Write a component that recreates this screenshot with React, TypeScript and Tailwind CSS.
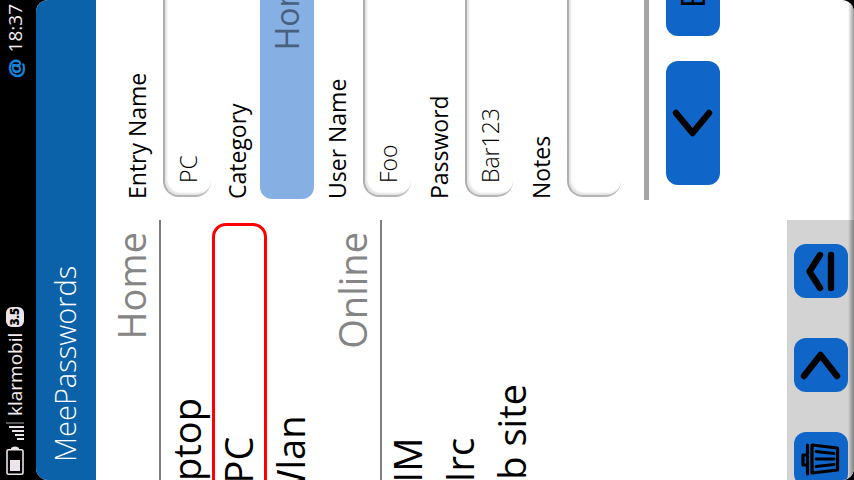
import type { ReactNode } from 'react';

const FONT = "font-['Open_Sans','Noto_Sans',sans-serif]";

function StatusBar() {
  return (
    <header className="flex h-9 shrink-0 items-center justify-between bg-black px-1 pb-2.5 pt-1 text-[19px] leading-6 text-[#f4ecf0]">
      <div className="flex items-center gap-1.5">
        <svg className="h-[18px] w-[30px]" viewBox="0 0 30 18" aria-label="Battery">
          <rect x="1.8" y="1" width="24.4" height="16" rx="1.5" fill="none" stroke="#ece4ea" strokeWidth="1.6" />
          <path d="M27 5h1q1.500 1 1.500 4t-1.500 4h-1z" fill="#ece4ea" />
          <rect x="5" y="4" width="11" height="10" fill="#ece4ea" />
        </svg>
        <svg className="h-[18px] w-[18px]" viewBox="0 0 18 18" aria-label="Signal">
          <path d="M0 11h2v7h-2zM4 9h2v9h-2zM8 6h2v12h-2zM12 3h2v15h-2z" fill="#ece4ea" />
          <path d="M16 0h2v18h-2z" fill="#555" />
        </svg>
        <span>klarmobil</span>
        <span className="h-[18px] w-5 rounded-md bg-[#ece4ea] text-center text-[12px] font-extrabold leading-[18px] text-black">3.5</span>
      </div>
      <div className="flex items-center gap-1.5">
        <span className="text-[22px] font-bold text-[#1188e0]">@</span>
        <time>18:37</time>
      </div>
    </header>
  );
}

function GroupHeader({ children }: { children: ReactNode }) {
  return (
    <h2 className="h-[65px] border-b-2 border-[#808080] pr-3 pt-3 text-right text-[38px] leading-[46px] text-[#858585]">
      {children}
    </h2>
  );
}

function Entry({ name, selected = false }: { name: string; selected?: boolean }) {
  return (
    <li className="relative h-[52px]">
      <button type="button" className="block h-full w-full pb-0.5 text-center text-[38px] leading-[50px] text-black">
        {name}
      </button>
      {selected && (
        <span className="pointer-events-none absolute -bottom-0.5 -top-px left-[3px] right-[3px] rounded-[14px] border-[3px] border-[#ff0000]" />
      )}
    </li>
  );
}

function IconButton({ label, wide = false, children }: { label: string; wide?: boolean; children: ReactNode }) {
  return (
    <button
      type="button"
      aria-label={label}
      className={`flex h-[54px] shrink-0 items-center justify-center rounded-xl bg-[#1065c8] text-black ${wide ? 'w-[124px]' : 'w-[54px]'}`}
    >
      {children}
    </button>
  );
}

function Stroke({ d }: { d: string }) {
  return (
    <svg className="h-[54px] w-[54px]" viewBox="0 0 54 54" fill="none" stroke="currentColor" strokeWidth="6.400" strokeLinecap="round" strokeLinejoin="round">
      <path d={d} />
    </svg>
  );
}

function TrashIcon() {
  return (
    <svg className="h-[54px] w-[54px]" viewBox="0 0 54 54" fill="none" stroke="currentColor" strokeWidth="3.200" strokeLinecap="round" strokeLinejoin="round">
      <path d="M21 13V9h10v4M12 13.500h29M13 18h28l-3 25.500h-22z" />
      <path d="M19.500 22l2 18M27 22v18M34.500 22l-2 18" strokeWidth="2.800" />
    </svg>
  );
}

function EntryList() {
  return (
    <section className="flex w-full shrink-0 flex-col">
      <div className="flex-1">
        <GroupHeader>Home</GroupHeader>
        <ul>
          <Entry name="Laptop" />
          <Entry name="PC" selected />
          <Entry name="Wlan" />
        </ul>
        <GroupHeader>Online</GroupHeader>
        <ul>
          <Entry name="IM" />
          <Entry name="Irc" />
          <Entry name="Web site" />
        </ul>
      </div>
      <nav className="flex h-[67px] justify-end gap-10 bg-[#d3d3d3] pr-6 pt-[7px]">
        <IconButton label="Delete entry">
          <TrashIcon />
        </IconButton>
        <IconButton label="Open entry">
          <Stroke d="M16 10L37 26.500L16 43" />
        </IconButton>
        <IconButton label="Menu">
          <Stroke d="M10 26L26.500 15.500L43 26M10 37H43" />
        </IconButton>
      </nav>
    </section>
  );
}

function Field({ id, label, value, tall = false }: { id: string; label: string; value: string; tall?: boolean }) {
  return (
    <div className="mb-[13px]">
      <label htmlFor={id} className="block h-[41px] text-[23px] leading-[30px]">
        {label}
      </label>
      <input
        id={id}
        defaultValue={value}
        className={`ml-0.5 block w-[396px] rounded-2xl border-l-2 border-t-2 border-l-[#b4b4b4] border-t-[#b0acb0] bg-white px-3 text-[23px] font-light leading-7 text-black shadow-[inset_2px_2px_2px_#e4e4e4] outline-none ${tall ? 'h-[54px]' : 'h-12'}`}
      />
    </div>
  );
}

function EntryForm() {
  return (
    <form className="w-full shrink-0 pt-[26px]">
      <div className="pl-px">
        <Field id="name" label="Entry Name" value="PC" />
        <div className="-mt-0.5 mb-2">
          <label htmlFor="category" className="block h-[38px] text-[23px] leading-[30px]">
            Category
          </label>
          <button id="category" type="button" className="block h-[54px] w-[388px] rounded-xl bg-[#86b0e3] text-center text-[32px] leading-[54px] text-[#48607d]">
            Home
          </button>
        </div>
        <Field id="user" label="User Name" value="Foo" />
        <Field id="password" label="Password" value="Bar123" />
        <Field id="notes" label="Notes" value="" tall />
      </div>
      <hr className="mt-[23px] border-0 border-t-[5px] border-[#a3a6a3]" />
      <div className="flex gap-[25px] pl-[15px] pt-[17px]">
        <IconButton label="Back" wide>
          <Stroke d="M37 10L17 26.500L37 43" />
        </IconButton>
        <button type="button" className="h-[54px] w-[124px] rounded-xl bg-[#1065c8] pl-7 text-left text-[32px] font-medium text-black">
          Edit
        </button>
      </div>
    </form>
  );
}

export default function App() {
  return (
    <div className={`h-screen w-screen overflow-hidden bg-black ${FONT}`}>
      <div className="flex h-[100vw] w-[100vh] origin-top-left translate-y-[100vh] -rotate-90 flex-col overflow-hidden bg-black">
        <StatusBar />
        <main className="relative flex min-h-0 flex-1 flex-col overflow-hidden rounded-xl bg-white">
          <h1 className="h-[60px] shrink-0 bg-[#0c62a8] pl-[18px] text-[29px] font-light leading-[58px] text-white">MeePasswords</h1>
          <div className="-ml-[220px] flex min-h-0 w-full flex-1 gap-5">
            <EntryList />
            <EntryForm />
          </div>
          <div className="pointer-events-none absolute inset-x-0 bottom-0 h-1.5 bg-gradient-to-b from-transparent to-black/40" />
        </main>
      </div>
    </div>
  );
}
